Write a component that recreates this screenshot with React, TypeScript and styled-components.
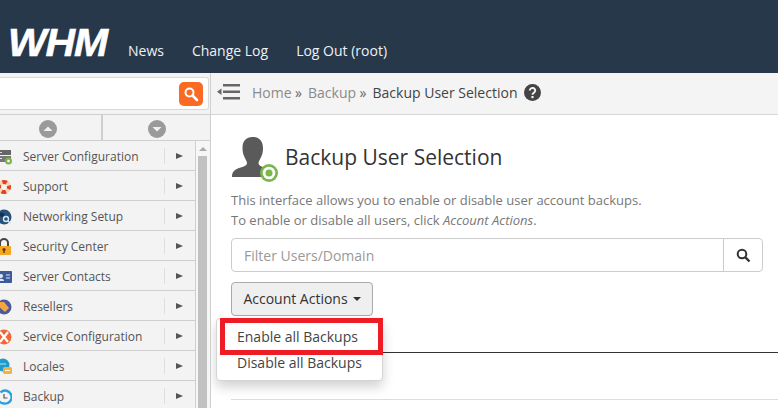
import React from "react";
import styled, { createGlobalStyle } from "styled-components";

const dots = (c: string) => `radial-gradient(${c} 0.6px, transparent 0.7px) 0 0 / 2px 2px`;

const Global = createGlobalStyle`
  html, body { margin: 0; padding: 0; background: #fff; }
  body { font-family: "Open Sans", "Liberation Sans", sans-serif; width: 778px; height: 408px; overflow: hidden; }
  * { box-sizing: border-box; }
`;
const Page = styled.div`width: 778px; height: 408px; overflow: hidden; display: flex; flex-direction: column;`;
const Header = styled.header`
  height: 73px; flex: none; background: ${dots("#2b3d51")}, #27384b; display: flex; align-items: flex-end; padding: 0 0 12px 8px;
`;
const Logo = styled.span`
  font: italic 900 39px/39px "Liberation Sans", sans-serif; color: #fff; width: 101px; margin-bottom: -1px;
  letter-spacing: -1px; transform: scaleX(1.05); transform-origin: left center; -webkit-text-stroke: 0.6px #fff;
`;
const Nav = styled.nav`display: flex; gap: 28px; margin-left: 19px; font-size: 14px; line-height: 20px; color: #eef1f3;`;
const Body = styled.div`flex: 1; display: flex; min-height: 0;`;
const Sidebar = styled.aside`
  width: 211px; flex: none; background: ${dots("#e9e9e9")}, #f3f3f3; border-right: 1px solid #cfcfcf; display: flex; flex-direction: column; overflow: hidden;
`;
const SearchRow = styled.div`height: 42px; flex: none; padding: 4px 1px 4px 0; border-bottom: 1px solid #cfcfcf; `;
const SearchBox = styled.div`
  height: 33px; background: #fff; border: 1px solid #d8d8d8; border-left: 0; border-radius: 0 3px 3px 0;
  display: flex; align-items: center; justify-content: flex-end; padding-right: 5px;
`;
const OrangeBtn = styled.div`
  width: 24px; height: 24px; border-radius: 5px; background: #fb6a22; display: flex; align-items: center; justify-content: center;
`;
const ArrowRow = styled.div`height: 26px; flex: none; display: flex; border-bottom: 1px solid #cfcfcf; `;
const ArrowCell = styled.div<{ $w: number; $line?: boolean }>`
  width: ${p => p.$w}px; display: flex; align-items: center; justify-content: center; padding-top: 2px;
  padding-right: ${p => (p.$line ? "5px" : "0")};
  border-right: ${p => (p.$line ? "2px solid #cfcfcf" : "0")};
`;
const SideBody = styled.div`flex: 1; display: flex; min-height: 0;`;
const Items = styled.ul`list-style: none; margin: 0; padding: 0; width: 196px; flex: none; border-right: 1px solid #cfcfcf;`;
const Item = styled.li`
  height: 30px; border-bottom: 1px solid #cfcfcf; display: flex; align-items: center; padding: 1px 0 0 23px; position: relative;
  font-size: 12px; color: #555;
`;
const ItemIcon = styled.span`position: absolute; left: -4px; top: 7px; width: 16px; height: 18px; display: block;`;
const ItemLabel = styled.span`flex: 1;`;
const ItemSep = styled.span`width: 1px; height: 16px; background: #dedede; margin-right: 11px;`;
const ItemArrow = styled.span`
  width: 0; height: 0; border-left: 7px solid #555; border-top: 3.5px solid transparent; border-bottom: 3.5px solid transparent; margin-right: 12px;
`;
const Scroll = styled.div`flex: 1; padding: 2px 2px 0 2px; display: flex; flex-direction: column; align-items: stretch; background: #f6f6f6;`;
const ScrollUp = styled.div`
  width: 0; height: 0; margin: 4px auto 5px; border-bottom: 4px solid #aaa; border-left: 4px solid transparent; border-right: 4px solid transparent;
`;
const ScrollThumb = styled.div`flex: 1; background: #c1c1c1; margin-right: 1px;`;
const Main = styled.main`flex: 1; min-width: 0; display: flex; flex-direction: column; position: relative; overflow: hidden;`;
const Crumbs = styled.div`
  height: 42px; flex: none; background: ${dots("#ececec")}, #f4f4f4; border-bottom: 1px solid #d6d6d6; display: flex; align-items: center; padding: 0 0 3px 6px;
  font-size: 14px; color: #8a8a8a;
`;
const CrumbSep = styled.span`color: #666; margin: 0 6px 0 3.5px;`;
const CrumbNow = styled.span`color: #444;`;
const MenuGlyph = styled.svg`margin-right: 12px; flex: none;`;
const HelpGlyph = styled.svg`margin-left: 7px; flex: none;`;
const Content = styled.div`flex: 1; padding: 18px 0 0 20px; display: flex; flex-direction: column; min-height: 0;`;
const TitleRow = styled.div`display: flex; align-items: flex-start; height: 50px;`;
const Title = styled.h1`margin: 9px 0 0 6px; font-size: 21px; line-height: 30px; font-weight: 400; color: #333;`;
const Intro = styled.p`margin: 0; font-size: 13px; line-height: 20px; color: #777; padding-top: 7px;`;
const FilterGroup = styled.div`
  margin: 8px 15px 0 0; height: 34px; border: 1px solid #ccc; border-radius: 4px; display: flex; align-items: center;
`;
const FilterText = styled.span`flex: 1; padding-left: 12px; font-size: 14px; color: #999;`;
const FilterBtn = styled.span`
  width: 39px; height: 100%; border-left: 1px solid #ccc; display: flex; align-items: center; justify-content: center;
`;
const ActionWrap = styled.div`margin-top: 10px;`;
const ActionBtn = styled.div`
  width: 142px; height: 34px; border: 1px solid #aaa; border-radius: 4px; background: #efefef; display: flex; align-items: center; justify-content: center;
  font-size: 14px; color: #333; padding-bottom: 2px;
`;
const Caret = styled.span`
  width: 0; height: 0; margin: 2px 0 0 5px; border-top: 4px solid #333; border-left: 4px solid transparent; border-right: 4px solid transparent;
`;
const Rule = styled.div<{ $top: number; $color: string }>`
  position: absolute; left: 20px; right: 0; top: ${p => p.$top}px; height: 1px; background: ${p => p.$color};
`;
const Menu = styled.div`
  position: absolute; left: 5px; top: 245px; width: 167px; height: 63px; background: #fff; border: 1px solid #d4d4d4; border-radius: 4px;
  box-shadow: 0 6px 12px rgba(0,0,0,.18); padding-top: 5px; font-size: 14px; color: #444;
`;
const MenuItem = styled.div`height: 26px; line-height: 26px; padding-left: 20px;`;
const Highlight = styled.div`
  position: absolute; left: 9px; top: 245px; width: 163px; height: 37px; border: 5px solid #ee1c25;
`;

const ItemsData: [string, React.ReactNode][] = [
  ["Server Configuration", <svg viewBox="0 0 16 18" width="16" height="18"><rect x="1" y="2" width="14" height="5" fill="#666"/><rect x="1" y="8" width="14" height="6" fill="#777"/><path d="M3 4.500h3M3 10.500h3" stroke="#ddd"/><circle cx="12.500" cy="13" r="3.500" fill="#7ab648"/><circle cx="12.500" cy="13" r="1.300" fill="#fff"/></svg>],
  ["Support", <svg viewBox="0 0 16 18" width="16" height="18"><circle cx="8" cy="9" r="5" fill="none" stroke="#f0d9a8" strokeWidth="4"/><circle cx="8" cy="9" r="5" fill="none" stroke="#e2402c" strokeWidth="4" strokeDasharray="4.500 3.350" strokeDashoffset="2.250"/></svg>],
  ["Networking Setup", <svg viewBox="0 0 16 18" width="16" height="18"><circle cx="8" cy="9" r="7.500" fill="#27527c"/><path d="M3 6c2-2 4-1 5 0s-1 3-3 3z" fill="#14304d"/><circle cx="10" cy="11" r="2.500" fill="none" stroke="#dfe6ee" strokeWidth="1.400"/><path d="M12 13l2.500 2.500" stroke="#dfe6ee" strokeWidth="1.600"/></svg>],
  ["Security Center", <svg viewBox="0 0 16 18" width="16" height="18"><path d="M4 8V5a4 4 0 018 0v3" fill="none" stroke="#444" strokeWidth="2"/><rect x="1" y="8" width="14" height="9" rx="1" fill="#f5a623"/><circle cx="8" cy="11.500" r="1.600" fill="#5c3d00"/><rect x="7.300" y="11.500" width="1.400" height="3.500" fill="#5c3d00"/></svg>],
  ["Server Contacts", <svg viewBox="0 0 16 18" width="16" height="18"><rect x="0" y="3" width="16" height="12" rx="1" fill="#3d5b9a"/><circle cx="5" cy="8" r="2" fill="#dfe6f2"/><path d="M2 13c0-3 6-3 6 0z" fill="#dfe6f2"/><path d="M10 7h4M10 10h4" stroke="#dfe6f2" strokeWidth="1.200"/></svg>],
  ["Resellers", <svg viewBox="0 0 16 18" width="16" height="18"><circle cx="8" cy="9" r="7.500" fill="#4a5a9c"/><path d="M2 4h6l5 6-4 4-7-6z" fill="#f5a63a"/></svg>],
  ["Service Configuration", <svg viewBox="0 0 16 18" width="16" height="18"><circle cx="8" cy="9" r="7.500" fill="#f0683a"/><path d="M4 4l8 10M12 4L4 14" stroke="#fff" strokeWidth="2.200"/></svg>],
  ["Locales", <svg viewBox="0 0 16 18" width="16" height="18"><circle cx="7" cy="7" r="6.500" fill="#1f9ccb"/><rect x="7" y="9" width="9" height="7" rx="1.500" fill="#f3b13f"/><path d="M9 12.500h5" stroke="#fff" strokeWidth="1"/><path d="M3 6h7" stroke="#bfe6f3" strokeWidth="1"/></svg>],
  ["Backup", <svg viewBox="0 0 16 18" width="16" height="18"><path d="M4.500 4.500A6.500 6.500 0 118 15.500 6.500 6.500 0 011.500 9" fill="none" stroke="#2a9fe0" strokeWidth="2.400"/><path d="M8 6v4h3.500" fill="none" stroke="#555" strokeWidth="1.200"/></svg>],
];

export default function App() {
  return (
    <Page>
      <Global />
      <Header>
        <Logo>WHM</Logo>
        <Nav><span>News</span><span>Change Log</span><span>Log Out (root)</span></Nav>
      </Header>
      <Body>
        <Sidebar>
          <SearchRow>
            <SearchBox>
              <OrangeBtn>
                <svg width="16" height="16" viewBox="0 0 16 16"><circle cx="6.500" cy="6.500" r="4" fill="none" stroke="#fff" strokeWidth="2"/><path d="M9.500 9.500l4.500 4.500" stroke="#fff" strokeWidth="2.600" strokeLinecap="round"/></svg>
              </OrangeBtn>
            </SearchBox>
          </SearchRow>
          <ArrowRow>
            <ArrowCell $w={103} $line>
              <svg width="18" height="18" viewBox="0 0 18 18"><circle cx="9" cy="9" r="9" fill="#9a9a9a"/><path d="M4.500 11L9 6.500l4.500 4.500z" fill="#f1f1f1"/></svg>
            </ArrowCell>
            <ArrowCell $w={107}>
              <svg width="18" height="18" viewBox="0 0 18 18"><circle cx="9" cy="9" r="9" fill="#9a9a9a"/><path d="M4.500 7L9 11.500l4.500-4.500z" fill="#f1f1f1"/></svg>
            </ArrowCell>
          </ArrowRow>
          <SideBody>
            <Items>
              {ItemsData.map(([label, icon]) => (
                <Item key={label}>
                  <ItemIcon>{icon}</ItemIcon>
                  <ItemLabel>{label}</ItemLabel>
                  <ItemSep />
                  <ItemArrow />
                </Item>
              ))}
            </Items>
            <Scroll><ScrollUp /><ScrollThumb /></Scroll>
          </SideBody>
        </Sidebar>
        <Main>
          <Crumbs>
            <MenuGlyph width="23" height="18" viewBox="0 0 23 18">
              <path d="M6 1h17v2.500H6zM6 7.500h17V10H6zM6 14h17v2.500H6zM0 8.800l4.500-3.300v6.600z" fill="#666" />
            </MenuGlyph>
            <span>Home</span><CrumbSep>»</CrumbSep>
            <span>Backup</span><CrumbSep>»</CrumbSep>
            <CrumbNow>Backup User Selection</CrumbNow>
            <HelpGlyph width="17" height="17" viewBox="0 0 17 17">
              <circle cx="8.500" cy="8.500" r="8.500" fill="#444" />
              <path d="M5.800 6.500a2.700 2.500 0 115 1.300c-.7 1-2.300 1.300-2.300 2.900" fill="none" stroke="#f2f2f2" strokeWidth="2" />
              <rect x="7.400" y="12" width="2.200" height="2.200" fill="#f2f2f2" />
            </HelpGlyph>
          </Crumbs>
          <Content>
            <TitleRow>
              <svg width="48" height="50" viewBox="0 0 48 50">
                <path d="M1 44c0-5 2-7 7-9 5-1.500 8-2.500 8-5 0-2-2-4-3-7-1-2-1.500-5-1.500-8C11.500 8 15 4 21.500 4S32 8 32 15c0 3-.5 6-1.500 8-1 3-3 5-3 7 0 2.500 3 3.500 7 5l2 9z" fill="#5a5a5a" />
                <circle cx="38" cy="40" r="9" fill="#7ab648" />
                <circle cx="38" cy="40" r="6.300" fill="#fff" />
                <circle cx="38" cy="40" r="3.500" fill="#7ab648" />
              </svg>
              <Title>Backup User Selection</Title>
            </TitleRow>
            <Intro>
              This interface allows you to enable or disable user account backups.<br />
              To enable or disable all users, click <em>Account Actions</em>.
            </Intro>
            <FilterGroup>
              <FilterText>Filter Users/Domain</FilterText>
              <FilterBtn>
                <svg width="15" height="15" viewBox="0 0 15 15"><circle cx="6" cy="6" r="4.300" fill="none" stroke="#333" strokeWidth="2"/><path d="M9.200 9.200l4.300 4.300" stroke="#333" strokeWidth="2.400"/></svg>
              </FilterBtn>
            </FilterGroup>
            <ActionWrap>
              <ActionBtn>Account Actions<Caret /></ActionBtn>
            </ActionWrap>
          </Content>
          <Rule $top={279} $color="#333" />
          <Rule $top={326} $color="#ddd" />
          <Menu>
            <MenuItem>Enable all Backups</MenuItem>
            <MenuItem>Disable all Backups</MenuItem>
          </Menu>
          <Highlight />
        </Main>
      </Body>
    </Page>
  );
}
